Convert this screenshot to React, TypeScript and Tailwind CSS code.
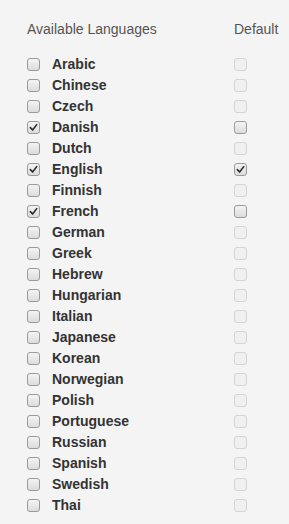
import React from 'react';

type Lang = { name: string; available: boolean; isDefault: boolean; defaultEnabled: boolean };

const names = [
  'Arabic', 'Chinese', 'Czech', 'Danish', 'Dutch', 'English', 'Finnish', 'French', 'German', 'Greek', 'Hebrew',
  'Hungarian', 'Italian', 'Japanese', 'Korean', 'Norwegian', 'Polish', 'Portuguese', 'Russian', 'Spanish', 'Swedish', 'Thai',
];

const checkedSet = ['Danish', 'English', 'French'];

const languages: Lang[] = names.map((name) => ({
  name,
  available: checkedSet.includes(name),
  isDefault: name === 'English',
  defaultEnabled: checkedSet.includes(name),
}));

const Box = ({ checked, disabled }: { checked: boolean; disabled?: boolean }) => (
  <span
    className={
      disabled
        ? 'relative flex h-[13px] w-[13px] items-center justify-center rounded-[3px] border border-[#d4d4d4] bg-[#f0f0f0]'
        : 'relative flex h-[13px] w-[13px] items-center justify-center rounded-[3px] border border-[#9a9a9a] bg-gradient-to-b from-[#f4f4f4] to-[#dcdcdc]'
    }
  >
    {checked && (
      <svg viewBox="0 0 10 10" className="h-[9px] w-[9px]">
        <path d="M1.5 5.2 L4 7.8 L8.6 1.8" fill="none" stroke="#2b2b2b" strokeWidth="1.8" strokeLinecap="round" strokeLinejoin="round" />
      </svg>
    )}
  </span>
);

export default function App() {
  return (
    <div className="min-h-[524px] w-[289px] bg-[#f4f4f4] pl-[27px] pt-[20px] font-['Liberation_Sans',Arial,sans-serif]">
      <div className="flex text-[14px] leading-[18px] text-[#555]">
        <span className="w-[207px]">Available Languages</span>
        <span>Default</span>
      </div>
      <div className="mt-[16px] flex flex-col">
        {languages.map((l) => (
          <div key={l.name} className="flex h-[21px] items-center">
            <Box checked={l.available} />
            <span className="ml-[12px] w-[182px] text-[14px] font-bold text-[#333]">{l.name}</span>
            <Box checked={l.isDefault} disabled={!l.defaultEnabled} />
          </div>
        ))}
      </div>
    </div>
  );
}
